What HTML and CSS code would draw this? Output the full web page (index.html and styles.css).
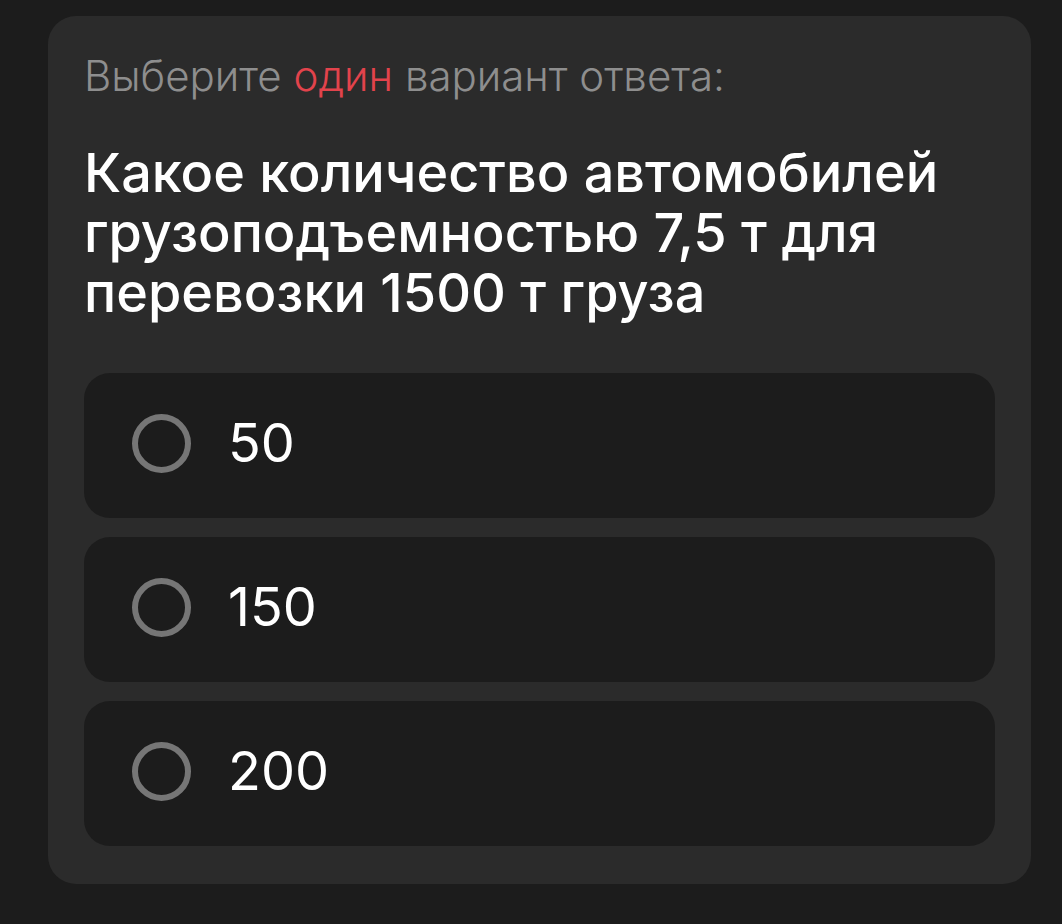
FILE: index.html
```html
<!DOCTYPE html>
<html lang="ru">
<head>
<meta charset="utf-8">
<title>Вопрос</title>
<link rel="stylesheet" href="styles.css">
</head>
<body>
<div class="card">
  <p class="hint">Выберите <span class="accent">один</span> вариант ответа:</p>
  <h1 class="question">Какое количество автомобилей грузоподъемностью 7,5 т для перевозки 1500 т груза</h1>
  <div class="options">
    <label class="option"><span class="radio"></span><span class="opt-text">50</span></label>
    <label class="option"><span class="radio"></span><span class="opt-text">150</span></label>
    <label class="option"><span class="radio"></span><span class="opt-text">200</span></label>
  </div>
</div>
</body>
</html>
```
FILE: styles.css
```css
html, body {
  margin: 0;
  background: #1c1c1c;
}
body {
  padding: 16px 31px 40px 48px;
  font-family: "Inter", "Noto Sans", sans-serif;
}
.card {
  background: #2b2b2b;
  border-radius: 28px;
  padding: 35px 36px 38px;
}
.hint {
  margin: 0;
  font-size: 42px;
  line-height: 50px;
  font-weight: 300;
  color: #8e8e8e;
}
.accent {
  color: #e2434c;
}
.question {
  margin: 42px 0 0;
  font-size: 54px;
  line-height: 60px;
  font-weight: 500;
  color: #ffffff;
  max-width: 880px;
}
.options {
  margin-top: 50px;
  display: flex;
  flex-direction: column;
  gap: 19px;
}
.option {
  height: 145px;
  background: #1c1c1c;
  border-radius: 26px;
  display: flex;
  align-items: center;
  padding-left: 48px;
}
.radio {
  width: 47px;
  height: 47px;
  border: 6px solid #767676;
  border-radius: 50%;
  flex: none;
  margin-bottom: 4px;
}
.opt-text {
  margin-left: 37px;
  padding-bottom: 6px;
  font-size: 54px;
  line-height: 60px;
  font-weight: 400;
  color: #ffffff;
}
```
